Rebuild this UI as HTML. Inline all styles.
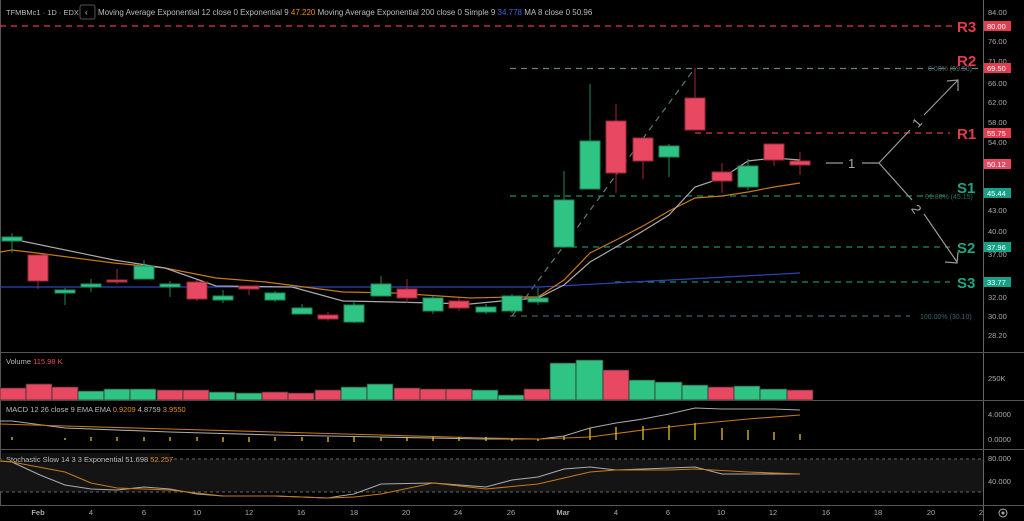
<!DOCTYPE html>
<html><head><meta charset="utf-8"><style>
html,body{margin:0;padding:0;background:#000;width:1024px;height:521px;overflow:hidden}
svg{display:block;font-family:"Liberation Sans",sans-serif}
</style></head><body>
<svg width="1024" height="521" viewBox="0 0 1024 521" xmlns="http://www.w3.org/2000/svg">
<rect width="1024" height="521" fill="#000"/>
<!-- header -->
<text x="6" y="15" font-size="7.5" fill="#bbb">TFMBMc1 · 1D · EDX</text>
<rect x="80" y="5" width="15" height="14" rx="2" fill="none" stroke="#555"/>
<text x="85" y="15" font-size="8" fill="#ccc">‹</text>
<text x="98" y="15" font-size="8" fill="#bbb">Moving Average Exponential 12 close 0 Exponential 9 <tspan fill="#e8901a">47.220</tspan>  Moving Average Exponential 200 close 0 Simple 9 <tspan fill="#3c63d6">34.778</tspan>  MA 8 close 0  50.96</text>
<!-- pane separators -->
<line x1="983.5" y1="0" x2="983.5" y2="521" stroke="#666"/>
<line x1="0" y1="352.5" x2="1024" y2="352.5" stroke="#555"/>
<line x1="0" y1="400.5" x2="1024" y2="400.5" stroke="#555"/>
<line x1="0" y1="449.5" x2="1024" y2="449.5" stroke="#555"/>
<line x1="0" y1="505.5" x2="1024" y2="505.5" stroke="#555"/>
<line x1="0.5" y1="0" x2="0.5" y2="505" stroke="#555"/>
<!-- levels -->
<g stroke-dasharray="6,5" stroke-width="1.2">
<line x1="0" y1="26" x2="955" y2="26" stroke="#e03a4a"/>
<line x1="510" y1="68.5" x2="978" y2="68.5" stroke="#6a8080"/>
<line x1="695" y1="133" x2="950" y2="133" stroke="#e03a4a"/>
<line x1="510" y1="196" x2="950" y2="196" stroke="#1d8a6f"/>
<line x1="560" y1="247" x2="950" y2="247" stroke="#1d8a6f"/>
<line x1="615" y1="282" x2="950" y2="282" stroke="#1d8a6f"/>
<line x1="510" y1="316" x2="910" y2="316" stroke="#3d6468"/>
<line x1="512" y1="316" x2="695" y2="68" stroke="#5b7a7a"/>
</g>
<text x="928" y="71" font-size="7" fill="#4f6b6b">0.00% (69.50)</text>
<text x="925" y="199" font-size="7" fill="#2f6e60">61.80% (45.15)</text>
<text x="920" y="319" font-size="7" fill="#3d6468">100.00% (30.10)</text>
<g font-size="15" font-weight="bold">
<text x="957" y="32" fill="#e23c4e">R3</text>
<text x="957" y="66" fill="#e23c4e">R2</text>
<text x="957" y="139" fill="#e23c4e">R1</text>
<text x="957" y="193" fill="#1fa583">S1</text>
<text x="957" y="253" fill="#1fa583">S2</text>
<text x="957" y="288" fill="#1fa583">S3</text>
</g>
<!-- arrows -->
<g stroke="#999" stroke-width="1.2" fill="none">
<line x1="826" y1="163" x2="843" y2="163"/><line x1="862" y1="163" x2="879" y2="163"/>
<line x1="879" y1="163" x2="910" y2="130"/><line x1="924" y1="115" x2="958" y2="80"/>
<polyline points="947,81 958,80 958,91"/>
<line x1="879" y1="163" x2="912" y2="200"/><line x1="924" y1="214" x2="957" y2="262"/>
<polyline points="945,262 957,263 958,252"/>
</g>
<text x="848" y="168" font-size="13" fill="#aaa">1</text>
<text x="913" y="127" font-size="13" fill="#aaa" transform="rotate(-48 917 122)">1</text>
<text x="913" y="214" font-size="13" fill="#aaa" transform="rotate(55 917 209)">2</text>
<!-- MAs -->
<polyline fill="none" stroke="#2a45b8" stroke-width="1.2" points="0,287 540,287 800,273"/>
<polyline fill="none" stroke="#c77a14" stroke-width="1.2" points="0,252 12,250 37,253 114,263 165,268 216,278 266,282 343,292 394,293 470,298 512,297 538,297 564,280 590,253 616,240 643,226 669,211 695,198 722,196 748,192 774,187 800,183"/>
<polyline fill="none" stroke="#aaa" stroke-width="1.2" points="12,239 114,260 165,268 216,286 292,287 343,301 394,302 470,304 512,300 538,298 564,285 590,262 616,247 643,231 669,215 695,187 722,178 748,161 774,158 800,160"/>
<!-- candles -->
<g>
<g fill="#2fc483" stroke="#1e8a5d">
<line x1="12" y1="233" x2="12" y2="253"/><rect x="2" y="237" width="20" height="4"/>
<line x1="65" y1="288" x2="65" y2="305"/><rect x="55" y="290" width="20" height="3"/>
<line x1="91" y1="279" x2="91" y2="292"/><rect x="81" y="284" width="20" height="3"/>
<line x1="144" y1="260" x2="144" y2="279"/><rect x="134" y="266" width="20" height="13"/>
<line x1="170" y1="281" x2="170" y2="297"/><rect x="160" y="284" width="20" height="3"/>
<line x1="223" y1="290" x2="223" y2="303"/><rect x="213" y="296" width="20" height="4"/>
<line x1="275" y1="291" x2="275" y2="302"/><rect x="265" y="293" width="20" height="7"/>
<line x1="302" y1="304" x2="302" y2="314"/><rect x="292" y="308" width="20" height="6"/>
<line x1="354" y1="300" x2="354" y2="323"/><rect x="344" y="305" width="20" height="17"/>
<line x1="381" y1="276" x2="381" y2="296"/><rect x="371" y="284" width="20" height="12"/>
<line x1="433" y1="296" x2="433" y2="314"/><rect x="423" y="298" width="20" height="13"/>
<line x1="486" y1="304" x2="486" y2="314"/><rect x="476" y="307" width="20" height="5"/>
<line x1="512" y1="294" x2="512" y2="313"/><rect x="502" y="296" width="20" height="15"/>
<line x1="538" y1="288" x2="538" y2="305"/><rect x="528" y="298" width="20" height="4"/>
<line x1="564" y1="171" x2="564" y2="247"/><rect x="554" y="200" width="20" height="47"/>
<line x1="590" y1="84" x2="590" y2="189"/><rect x="580" y="141" width="20" height="48"/>
<line x1="669" y1="144" x2="669" y2="177"/><rect x="659" y="146" width="20" height="11"/>
<line x1="748" y1="159" x2="748" y2="190"/><rect x="738" y="166" width="20" height="21"/>
</g>
<g fill="#e84862" stroke="#a02838">
<line x1="38" y1="255" x2="38" y2="289"/><rect x="28" y="255" width="20" height="26"/>
<line x1="117" y1="269" x2="117" y2="284"/><rect x="107" y="280" width="20" height="2"/>
<line x1="197" y1="280" x2="197" y2="301"/><rect x="187" y="282" width="20" height="17"/>
<line x1="249" y1="286" x2="249" y2="295"/><rect x="239" y="286" width="20" height="3"/>
<line x1="328" y1="312" x2="328" y2="321"/><rect x="318" y="315" width="20" height="4"/>
<line x1="407" y1="279" x2="407" y2="303"/><rect x="397" y="289" width="20" height="9"/>
<line x1="459" y1="298" x2="459" y2="311"/><rect x="449" y="301" width="20" height="7"/>
<line x1="616" y1="104" x2="616" y2="193"/><rect x="606" y="121" width="20" height="52"/>
<line x1="643" y1="138" x2="643" y2="179"/><rect x="633" y="138" width="20" height="23"/>
<line x1="695" y1="68" x2="695" y2="130"/><rect x="685" y="98" width="20" height="32"/>
<line x1="722" y1="163" x2="722" y2="193"/><rect x="712" y="172" width="20" height="9"/>
<line x1="774" y1="144" x2="774" y2="166"/><rect x="764" y="144" width="20" height="16"/>
<line x1="800" y1="152" x2="800" y2="175"/><rect x="790" y="161" width="20" height="4"/>
</g>
</g>
<!-- right axis -->
<g font-size="7.5" fill="#aaa">
<text x="988" y="15">84.00</text><text x="988" y="44">76.00</text><text x="988" y="64">71.00</text>
<text x="988" y="86">66.00</text><text x="988" y="105">62.00</text><text x="988" y="125">58.00</text>
<text x="988" y="145">54.00</text><text x="988" y="213">43.00</text><text x="988" y="234">40.00</text>
<text x="988" y="257">37.00</text><text x="988" y="300">32.00</text><text x="988" y="319">30.00</text>
<text x="988" y="338">28.20</text>
<text x="988" y="381">250K</text><text x="988" y="417">4.0000</text><text x="988" y="442">0.0000</text>
<text x="988" y="461">80.000</text><text x="988" y="484">40.000</text>
</g>
<g font-size="7.5" fill="#fff">
<rect x="984" y="21" width="27" height="10" fill="#e23c4e"/><text x="987" y="29">80.00</text>
<rect x="984" y="63" width="27" height="10" fill="#e23c4e"/><text x="987" y="71">69.50</text>
<rect x="984" y="128" width="27" height="10" fill="#e23c4e"/><text x="987" y="136">55.75</text>
<rect x="984" y="159" width="27" height="10" fill="#e84862"/><text x="987" y="167">50.12</text>
<rect x="984" y="188" width="27" height="10" fill="#16a085"/><text x="987" y="196">45.44</text>
<rect x="984" y="242" width="27" height="10" fill="#16a085"/><text x="987" y="250">37.96</text>
<rect x="984" y="277" width="27" height="10" fill="#16a085"/><text x="987" y="285">33.77</text>
</g>
<!-- volume -->
<text x="6" y="364" font-size="7.5" fill="#bbb">Volume <tspan fill="#e84862">115.98 K</tspan></text>
<g stroke="#333" stroke-width="0.8">
<rect x="0" y="388" width="26" height="12" fill="#e84862"/>
<rect x="26" y="384" width="26" height="16" fill="#e84862"/>
<rect x="52" y="387" width="26" height="13" fill="#e84862"/>
<rect x="78" y="391" width="26" height="9" fill="#2fc483"/>
<rect x="104" y="389" width="26" height="11" fill="#2fc483"/>
<rect x="130" y="389" width="26" height="11" fill="#2fc483"/>
<rect x="157" y="390" width="26" height="10" fill="#e84862"/>
<rect x="183" y="390" width="26" height="10" fill="#e84862"/>
<rect x="209" y="392" width="26" height="8" fill="#2fc483"/>
<rect x="236" y="393" width="26" height="7" fill="#2fc483"/>
<rect x="262" y="392" width="26" height="8" fill="#e84862"/>
<rect x="288" y="393" width="26" height="7" fill="#e84862"/>
<rect x="315" y="390" width="26" height="10" fill="#e84862"/>
<rect x="341" y="387" width="26" height="13" fill="#2fc483"/>
<rect x="367" y="384" width="26" height="16" fill="#2fc483"/>
<rect x="394" y="388" width="26" height="12" fill="#e84862"/>
<rect x="420" y="389" width="26" height="11" fill="#e84862"/>
<rect x="446" y="389" width="26" height="11" fill="#e84862"/>
<rect x="472" y="390" width="26" height="10" fill="#2fc483"/>
<rect x="498" y="395" width="26" height="5" fill="#2fc483"/>
<rect x="524" y="389" width="26" height="11" fill="#e84862"/>
<rect x="550" y="363" width="26" height="37" fill="#2fc483"/>
<rect x="576" y="360" width="27" height="40" fill="#2fc483"/>
<rect x="603" y="370" width="26" height="30" fill="#e84862"/>
<rect x="629" y="380" width="26" height="20" fill="#2fc483"/>
<rect x="655" y="382" width="27" height="18" fill="#2fc483"/>
<rect x="682" y="385" width="26" height="15" fill="#2fc483"/>
<rect x="708" y="387" width="26" height="13" fill="#e84862"/>
<rect x="734" y="386" width="26" height="14" fill="#2fc483"/>
<rect x="760" y="389" width="27" height="11" fill="#2fc483"/>
<rect x="787" y="390" width="26" height="10" fill="#e84862"/>
</g>
<!-- MACD -->
<text x="6" y="412" font-size="7.5" fill="#bbb">MACD 12 26 close 9 EMA EMA  <tspan fill="#e8901a">0.9209</tspan>  4.8759  <tspan fill="#e8901a">3.9550</tspan></text>
<polyline fill="none" stroke="#aaa" stroke-width="1.1" points="0,421 12,421 65,428 170,432 275,435 380,437 485,439 540,439 564,436 590,428 616,423 643,419 669,414 695,408 722,409 774,409 800,410"/>
<polyline fill="none" stroke="#c77a14" stroke-width="1.1" points="0,424 65,426 170,429 275,432 380,435 485,438 540,439 590,437 643,430 695,424 748,419 800,415"/>
<g stroke="#e8c020" stroke-width="1.3">
<line x1="12" y1="437" x2="12" y2="440"/><line x1="65" y1="438" x2="65" y2="440"/><line x1="91" y1="437" x2="91" y2="441"/><line x1="117" y1="437" x2="117" y2="441"/><line x1="144" y1="437" x2="144" y2="441"/><line x1="170" y1="437" x2="170" y2="441"/><line x1="197" y1="437" x2="197" y2="441"/><line x1="223" y1="437" x2="223" y2="442"/><line x1="249" y1="437" x2="249" y2="442"/><line x1="275" y1="437" x2="275" y2="441"/><line x1="302" y1="437" x2="302" y2="441"/><line x1="328" y1="437" x2="328" y2="442"/><line x1="354" y1="437" x2="354" y2="442"/><line x1="381" y1="437" x2="381" y2="441"/><line x1="407" y1="437" x2="407" y2="441"/><line x1="433" y1="437" x2="433" y2="441"/><line x1="459" y1="437" x2="459" y2="441"/><line x1="486" y1="437" x2="486" y2="441"/><line x1="512" y1="439" x2="512" y2="441"/><line x1="538" y1="439" x2="538" y2="441"/><line x1="564" y1="436" x2="564" y2="440"/><line x1="590" y1="428" x2="590" y2="440"/><line x1="616" y1="427" x2="616" y2="440"/><line x1="643" y1="426" x2="643" y2="440"/><line x1="669" y1="425" x2="669" y2="440"/><line x1="695" y1="423" x2="695" y2="440"/><line x1="722" y1="428" x2="722" y2="440"/><line x1="748" y1="430" x2="748" y2="440"/><line x1="774" y1="432" x2="774" y2="440"/><line x1="800" y1="434" x2="800" y2="440"/>
</g>
<!-- Stoch -->
<rect x="0" y="459" width="983" height="33" fill="#141414"/>
<line x1="0" y1="459" x2="983" y2="459" stroke="#666" stroke-dasharray="3,3"/>
<line x1="0" y1="492" x2="983" y2="492" stroke="#666" stroke-dasharray="3,3"/>
<rect x="2" y="453" width="168" height="11" fill="#111"/>
<text x="6" y="462" font-size="7.5" fill="#bbb">Stochastic Slow 14 3 3 Exponential  51.698  <tspan fill="#e8901a">52.257</tspan></text>
<polyline fill="none" stroke="#aaa" stroke-width="1.1" points="0,461 12,462 40,475 65,485 91,489 117,490 144,487 170,489 197,494 223,496 275,496 328,498 340,496 354,494 381,484 433,483 486,487 512,480 538,477 564,469 590,467 616,470 643,469 669,468 695,467 722,474 774,474 800,474"/>
<polyline fill="none" stroke="#c77a14" stroke-width="1.1" points="0,461 12,462 65,472 91,483 117,488 144,489 170,490 223,496 275,496 328,498 354,497 381,494 433,483 486,489 538,484 564,478 590,472 616,470 669,470 695,469 748,472 800,474"/>
<!-- time axis -->
<g font-size="7.5" fill="#aaa" text-anchor="middle">
<text x="38" y="515" font-weight="bold">Feb</text><text x="91" y="515">4</text><text x="144" y="515">6</text><text x="197" y="515">10</text><text x="249" y="515">12</text><text x="301" y="515">16</text><text x="354" y="515">18</text><text x="406" y="515">20</text><text x="458" y="515">24</text><text x="511" y="515">26</text><text x="563" y="515" font-weight="bold">Mar</text><text x="616" y="515">4</text><text x="668" y="515">6</text><text x="721" y="515">10</text><text x="773" y="515">12</text><text x="826" y="515">16</text><text x="878" y="515">18</text><text x="931" y="515">20</text><text x="981" y="515">2</text>
</g>
<circle cx="1003" cy="513" r="4" fill="none" stroke="#aaa"/><circle cx="1003" cy="513" r="1.5" fill="#aaa"/>
</svg>
</body></html>
